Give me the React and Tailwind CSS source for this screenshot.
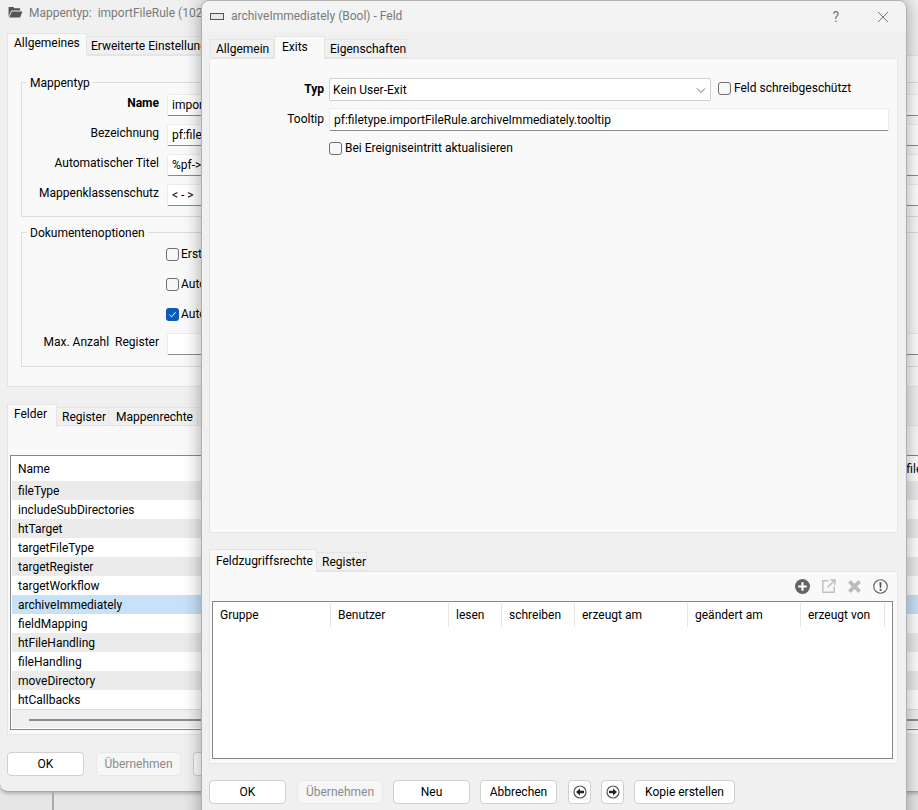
import React from 'react';

const Tab = ({ label, active, w, pad }) => (
  <div
    style={{ width: w }}
    className={
      active
        ? `h-[23px] -mb-px z-10 bg-[#f9f9f9] border border-[#e5e5e5] border-b-0 text-black whitespace-nowrap ${pad || 'pl-[6px] pt-[1px]'}`
        : `h-[19px] mt-[3px] bg-[#f0f0f0] border border-[#e5e5e5] border-l-0 first:border-l pt-[1px] text-black whitespace-nowrap ${pad || 'pl-[5px]'}`
    }
  >
    {label}
  </div>
);

const Check = ({ checked }) =>
  checked ? (
    <span className="flex w-[13px] h-[13px] shrink-0 items-center justify-center rounded-[3px] bg-[#0a5cb8]">
      <svg width="9" height="9" viewBox="0 0 9 9" fill="none" stroke="#fff" strokeWidth="1">
        <path d="M1.5 4.8 3.6 6.8 7.6 2.2" />
      </svg>
    </span>
  ) : (
    <span className="block w-[13px] h-[13px] shrink-0 rounded-[3px] border border-[#6f6f6f] bg-[#f7f7f7]" />
  );

const Input = ({ children, className = '' }) => (
  <div className={`bg-white border border-[#ececec] border-b-[#8a8a8a] rounded-[2px] pl-[4px] flex items-center ${className}`}>
    {children}
  </div>
);

const Btn = ({ children, w, disabled, className = '' }) => (
  <div
    style={{ width: w }}
    className={`h-[24px] shrink-0 flex items-center justify-center rounded-[4px] border ${
      disabled ? 'border-[#e8e8e8] bg-[#f6f6f6] text-[#8a8a8a]' : 'border-[#d0d0d0] bg-white text-black'
    } ${className}`}
  >
    {children}
  </div>
);

const Group = ({ title, children, legendW }) => (
  <div className="relative ml-[13px] h-[135px] border border-[#dcdcdc]">
    <span style={{ width: legendW }} className="absolute left-[4px] -top-[8px] bg-[#f9f9f9] pl-[4px] text-black whitespace-nowrap">
      {title}
    </span>
    {children}
  </div>
);

const FormRow = ({ label, bold, children }) => (
  <div className="flex h-[22px] items-center">
    <div className={`w-[138px] pr-[1px] text-right whitespace-pre -mt-[4px] ${bold ? 'font-bold' : ''}`}>{label}</div>
    <div className="ml-[7px] flex-1 flex items-center">{children}</div>
  </div>
);

const CheckRow = ({ label, checked }) => (
  <div className="flex h-[22px] items-center pl-[144px] gap-[2px]">
    <Check checked={checked} />
    <span>{label}</span>
  </div>
);

const fields = [
  'fileType',
  'includeSubDirectories',
  'htTarget',
  'targetFileType',
  'targetRegister',
  'targetWorkflow',
  'archiveImmediately',
  'fieldMapping',
  'htFileHandling',
  'fileHandling',
  'moveDirectory',
  'htCallbacks',
];

const columns = [
  ['Gruppe', 118],
  ['Benutzer', 118],
  ['lesen', 53],
  ['schreiben', 73],
  ['erzeugt am', 113],
  ['geändert am', 113],
  ['erzeugt von', 84],
];

const RoundArrow = ({ left }) => (
  <svg width="14" height="14" viewBox="0 0 14 14">
    <circle cx="7" cy="7" r="6" fill="none" stroke="#555" strokeWidth="1.2" />
    <path d={left ? 'M3 7 7 3.5V5.8H11V8.2H7V10.5Z' : 'M11 7 7 3.5V5.8H3V8.2H7V10.5Z'} fill="#222" />
  </svg>
);

// Hintergrundfenster (Mappentyp)
const BackWindow = () => (
  <div className="w-[1000px] h-[792px] shrink-0 bg-[#f0f0f0] rounded-bl-lg border-b border-[#a9a9a9] pl-[7px] shadow-[0_1px_4px_rgba(0,0,0,0.3)]">
    <div className="h-[33px] flex items-center gap-[6px] text-[#7a7a7a] pb-[7px]">
      <svg width="15" height="12" viewBox="0 0 16 13" className="shrink-0 ml-px -mt-[2px]">
        <path d="M0.5 1H5.5L7 2.5H13V5H3.5L0.5 12Z" fill="#555" />
        <path d="M4 6H15.5L13 12.5H1.2Z" fill="#555" />
      </svg>
      <span className="whitespace-pre">Mappentyp:  importFileRule (102)</span>
    </div>

    <div className="flex h-[22px] items-start">
      <Tab label="Allgemeines" active w={80} />
      <Tab label="Erweiterte Einstellungen" w={140} pad="pl-[4px]" />
    </div>
    <div className="h-[332px] w-[990px] border border-[#e5e5e5] bg-[#f9f9f9] pt-[26px]">
      <Group title="Mappentyp" legendW={66}>
        <div className="flex flex-col gap-[8px] pt-[11px]">
          <FormRow label="Name" bold>
            <Input className="w-full h-[22px]">importFileRule</Input>
          </FormRow>
          <FormRow label="Bezeichnung">
            <Input className="w-full h-[22px]">pf:filetype.importFileRule</Input>
          </FormRow>
          <FormRow label="Automatischer Titel">
            <Input className="w-full h-[22px]">%pf-&gt;</Input>
          </FormRow>
          <FormRow label="Mappenklassenschutz">
            <Input className="w-full h-[22px]">&lt; - &gt;</Input>
          </FormRow>
        </div>
      </Group>
      <div className="h-[15px]" />
      <Group title="Dokumentenoptionen" legendW={122}>
        <div className="flex flex-col gap-[8px] pt-[10px]">
          <CheckRow label="Erstellen" />
          <CheckRow label="Automatisch" />
          <CheckRow label="Automatisch" checked />
          <FormRow label="Max. Anzahl  Register">
            <Input className="w-full h-[22px]" />
          </FormRow>
        </div>
      </Group>
    </div>

    <div className="flex h-[21px] mt-[17px] items-start">
      <Tab label="Felder" active w={50} />
      <Tab label="Register" w={52} />
      <Tab label="Mappenrechte" w={89} pad="pl-[7px]" />
    </div>
    <div className="h-[310px] w-[990px] border border-[#e5e5e5] bg-[#f9f9f9] pt-[29px] pl-[2px]">
      <div className="h-[275px] border border-[#85858f] bg-white pl-px">
        <div className="h-[25px] flex items-center pl-[6px]">
          <span className="w-[870px]">Name</span>
          <span>Profile</span>
        </div>
        {fields.map((name, i) => (
          <div
            key={name}
            className={`h-[19px] pl-[6px] flex items-center ${
              name === 'archiveImmediately' ? 'bg-[#c7e1f8]' : i % 2 === 0 ? 'bg-[#ebebeb]' : 'bg-white'
            }`}
          >
            {name}
          </div>
        ))}
        <div className="h-[19px] bg-[#f0f0f0] border-t border-[#dcdcdc] pt-[9px] pl-[17px]">
          <div className="h-[2px] w-[900px] bg-[#8c8c8c]" />
        </div>
      </div>
    </div>

    <div className="flex mt-[17px] gap-[12px]">
      <Btn w={77}>OK</Btn>
      <Btn w={85} disabled>Übernehmen</Btn>
      <Btn w={80}>Abbrechen</Btn>
    </div>
  </div>
);

// Vordergrund-Dialog (Feld)
const FieldDialog = () => (
  <div className="absolute left-[201px] top-0 w-[706px] h-[830px] bg-[#f0f0f0] border border-[#b0b0b0] rounded-t-lg shadow-[0_0_18px_rgba(0,0,0,0.35)]">
    <div className="h-[31px] bg-[#f3f3f3] rounded-t-lg flex items-center pl-[8px] text-[#7a7a7a]">
      <span className="block w-[14px] h-[7px] border border-[#555] bg-[#e8e8e8]" />
      <span className="ml-[7px] -mt-px">archiveImmediately (Bool) - Feld</span>
      <span className="ml-auto mr-[38px] text-[14px]">?</span>
      <svg width="12" height="12" viewBox="0 0 12 12" stroke="#777" strokeWidth="1" className="mr-[17px]">
        <path d="M1 1 11 11M11 1 1 11" />
      </svg>
    </div>

    <div className="pl-[7px] pr-[8px]">
      <div className="flex h-[22px] mt-[4px] items-start pl-px">
        <Tab label="Allgemein" w={64} />
        <Tab label="Exits" active w={51} pad="pl-[7px] pt-[2px]" />
        <Tab label="Eigenschaften" w={82} />
      </div>
      <div className="h-[475px] border border-[#e5e5e5] bg-[#f9f9f9] pt-[19px]">
        <div className="flex h-[23px] items-center">
          <div className="w-[114px] text-right font-bold -mt-px">Typ</div>
          <div className="ml-[5px] w-[382px] h-[23px] bg-white border border-[#d0d0d0] rounded-[2px] pl-[3px] flex items-center justify-between pr-[3px]">
            <span>Kein User-Exit</span>
            <svg width="12" height="12" viewBox="0 0 12 12" fill="none" stroke="#666" strokeWidth="1" className="mt-[1px]">
              <path d="M2 4.5 6 8.5 10 4.5" />
            </svg>
          </div>
          <div className="ml-[7px] flex items-center gap-[3px] -mt-[3px]">
            <Check />
            <span>Feld schreibgeschützt</span>
          </div>
        </div>
        <div className="flex h-[23px] items-center mt-[7px]">
          <div className="w-[114px] text-right -mt-[2px]">Tooltip</div>
          <Input className="ml-[5px] w-[560px] h-[23px]">pf:filetype.importFileRule.archiveImmediately.tooltip</Input>
        </div>
        <div className="flex h-[14px] items-center mt-[10px] pl-[119px] gap-[3px]">
          <Check />
          <span>Bei Ereigniseintritt aktualisieren</span>
        </div>
      </div>

      <div className="flex h-[22px] mt-[16px] items-start">
        <Tab label="Feldzugriffsrechte" active w={108} pad="pl-[6px] pt-[3px]" />
        <Tab label="Register" w={50} />
      </div>
      <div className="h-[193px] border border-[#e5e5e5] bg-[#f9f9f9]">
        <div className="h-[29px] flex items-center justify-end gap-[11px] pr-[9px]">
          <svg width="15" height="15" viewBox="0 0 14 14">
            <circle cx="7" cy="7" r="7" fill="#646464" />
            <path d="M6 3H8V6H11V8H8V11H6V8H3V6H6Z" fill="#fff" />
          </svg>
          <svg width="15" height="15" viewBox="0 0 14 14" fill="none" stroke="#c0c0c0" strokeWidth="1.4">
            <path d="M7 1.7H1.7V12.3H12.3V7" />
            <path d="M6 8 12.5 1.5M8.5 1H13V5.5" />
          </svg>
          <svg width="15" height="15" viewBox="0 0 14 14" fill="none" stroke="#bcbcbc" strokeWidth="3.4">
            <path d="M2.2 2.2 11.8 11.8M11.8 2.2 2.2 11.8" />
          </svg>
          <svg width="15" height="15" viewBox="0 0 14 14">
            <circle cx="7" cy="7" r="6.3" fill="none" stroke="#646464" strokeWidth="1.1" />
            <path d="M6 3H8L7.6 8.4H6.4Z" fill="#555" />
            <circle cx="7" cy="10.2" r="1" fill="#555" />
          </svg>
        </div>
        <div className="ml-[2px] w-[681px] h-[158px] border border-[#85858f] bg-white">
          <div className="flex h-[24px] mt-px">
            {columns.map(([label, w]) => (
              <div key={label} style={{ width: w }} className="pl-[7px] flex items-center border-r-[1.5px] border-[#e6e6e6] whitespace-nowrap">
                {label}
              </div>
            ))}
          </div>
        </div>
      </div>

      <div className="flex mt-[16px]">
        <Btn w={77}>OK</Btn>
        <Btn w={86} disabled className="ml-[11px]">Übernehmen</Btn>
        <Btn w={77} className="ml-[10px]">Neu</Btn>
        <Btn w={77} className="ml-[10px]">Abbrechen</Btn>
        <Btn w={23} className="ml-[11px]"><RoundArrow left /></Btn>
        <Btn w={23} className="ml-[10px]"><RoundArrow /></Btn>
        <Btn w={101} className="ml-[10px]">Kopie erstellen</Btn>
      </div>
    </div>
  </div>
);

export default function App() {
  return (
    <div className="relative w-[918px] h-[810px] overflow-hidden bg-[#e6e6e6] text-[12px] leading-[16px] text-black font-['Roboto',sans-serif]">
      <BackWindow />
      <div className="ml-[52px] w-[2px] h-[18px] bg-[#ababab]" />
      <FieldDialog />
    </div>
  );
}
